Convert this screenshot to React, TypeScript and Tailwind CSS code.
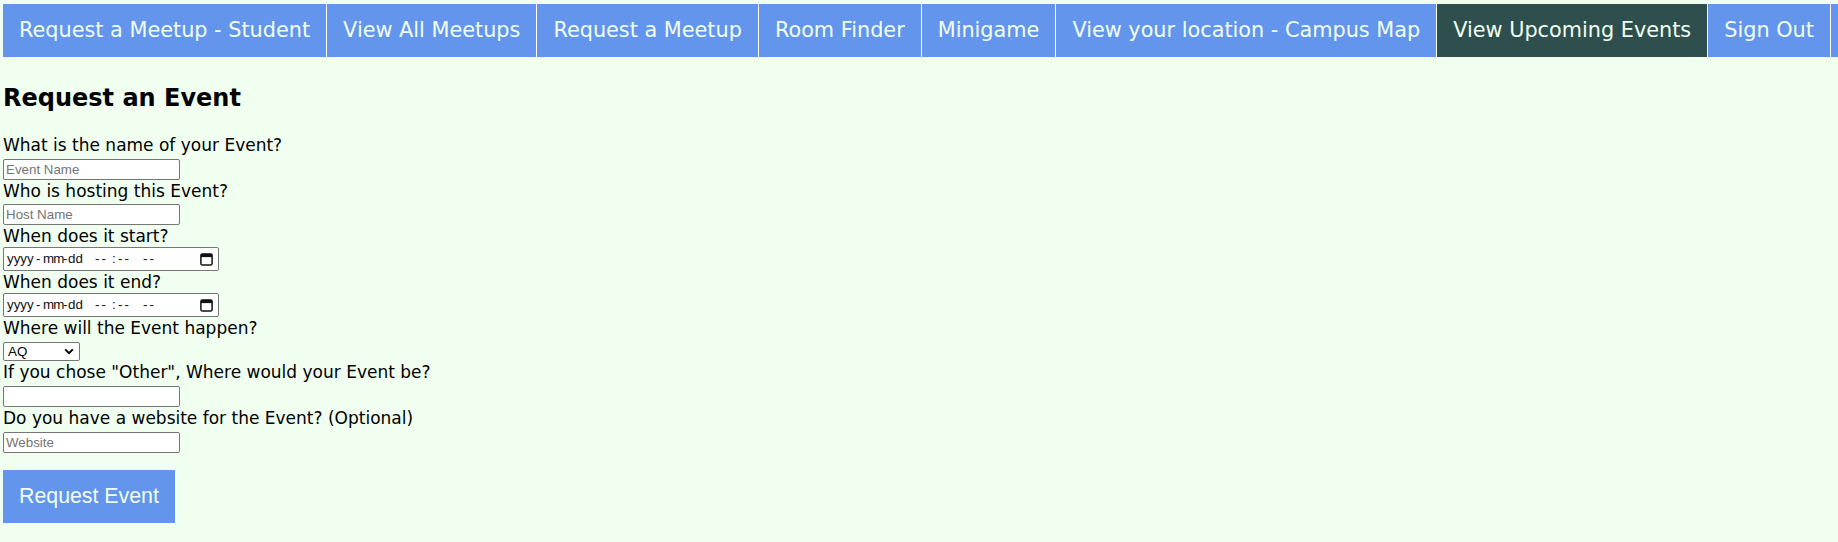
import React from "react";

const navItems = [
  "Request a Meetup - Student",
  "View All Meetups",
  "Request a Meetup",
  "Room Finder",
  "Minigame",
  "View your location - Campus Map",
  "View Upcoming Events",
  "Sign Out",
];

function CalendarIcon() {
  return (
    <svg width="13" height="14" viewBox="0 0 13 14" className="block">
      <rect x="0.9" y="1.9" width="11.2" height="11.2" rx="1.6" fill="none" stroke="#111" strokeWidth="1.5" />
      <rect x="0.9" y="1.9" width="11.2" height="3.2" fill="#111" />
    </svg>
  );
}

function DateField() {
  return (
    <div className="flex h-[24px] w-[216px] shrink-0 items-center rounded-[2px] border border-[#767676] bg-white text-[13.33px] text-[#111] [font-family:'Liberation_Sans',Arial,sans-serif]">
      <span className="ml-[3px] w-[29px] shrink-0">yyyy</span>
      <span className="w-[7px] shrink-0">-</span>
      <span className="w-[20px] shrink-0 tracking-[-0.8px]">mm</span>
      <span className="w-[5px] shrink-0">-</span>
      <span className="w-[27px] shrink-0">dd</span>
      <span className="w-[17px] shrink-0 tracking-[2px]">--</span>
      <span className="w-[6px] shrink-0">:</span>
      <span className="w-[25px] shrink-0 tracking-[2px]">--</span>
      <span className="w-[40px] shrink-0 tracking-[2px]">--</span>
      <span className="ml-[17px] shrink-0">
        <CalendarIcon />
      </span>
    </div>
  );
}

function TextField({ placeholder, className }: { placeholder?: string; className?: string }) {
  return (
    <input
      type="text"
      placeholder={placeholder}
      className={
        "block h-[21px] w-[177px] rounded-[2px] border border-[#767676] bg-white px-[2px] text-[13.33px] text-black outline-none placeholder:text-[#757575] [font-family:'Liberation_Sans',Arial,sans-serif] " +
        (className ?? "")
      }
    />
  );
}

export default function App() {
  return (
    <div className="min-h-[542px] w-full bg-[#f0fff0] pl-[3px] pt-1 text-black [font-family:'DejaVu_Sans','Verdana',sans-serif]">
      <nav className="flex overflow-hidden whitespace-nowrap bg-[#6495ed]">
        {navItems.map((item) => (
          <a
            key={item}
            href="#"
            className={
              "block shrink-0 border-r border-white px-4 py-[14px] text-[20.8px] leading-[25px] text-[#f0fff0] " +
              (item === "View Upcoming Events" ? "bg-[#2f4f4f]" : "bg-[#6495ed]")
            }
          >
            {item}
          </a>
        ))}
        <div className="flex-1" />
      </nav>

      <h2 className="mb-[22px] mt-[27px] text-[24px] font-bold leading-[28px]">Request an Event</h2>

      <form className="flex flex-col items-start" onSubmit={(e) => e.preventDefault()}>
        <label className="block text-[17px] leading-[22px]">What is the name of your Event?</label>
        <TextField placeholder="Event Name" className="mt-[3px]" />

        <label className="block text-[17px] leading-[22px]">Who is hosting this Event?</label>
        <TextField placeholder="Host Name" className="mt-[2px]" />

        <label className="block text-[17px] leading-[22px]">When does it start?</label>
        <DateField />

        <label className="block text-[17px] leading-[22px]">When does it end?</label>
        <DateField />

        <label className="block text-[17px] leading-[22px]">Where will the Event happen?</label>
        <div className="relative mt-[3px]">
          <select className="block h-[19px] w-[77px] appearance-none rounded-[2px] border border-[#767676] bg-white pl-[4px] text-[13.33px] leading-[17px] text-black outline-none [font-family:'Liberation_Sans',Arial,sans-serif]">
            <option>AQ</option>
            <option>Other</option>
          </select>
          <svg
            width="10"
            height="7"
            viewBox="0 0 10 7"
            className="pointer-events-none absolute left-[61px] top-[6px]"
          >
            <path d="M1.2 1.4 L5 5.2 L8.8 1.4" fill="none" stroke="#000" strokeWidth="2" />
          </svg>
        </div>

        <label className="block text-[17px] leading-[22px]">If you chose "Other", Where would your Event be?</label>
        <TextField className="mt-[3px]" />

        <label className="block text-[17px] leading-[22px]">Do you have a website for the Event? (Optional)</label>
        <TextField placeholder="Website" className="mt-[3px]" />

        <button
          type="submit"
          className="mt-[17px] bg-[#6495ed] px-4 py-[14px] text-[21.33px] leading-[25px] text-[#f0fff0] [font-family:'Liberation_Sans',Arial,sans-serif]"
        >
          Request Event
        </button>
      </form>
    </div>
  );
}
